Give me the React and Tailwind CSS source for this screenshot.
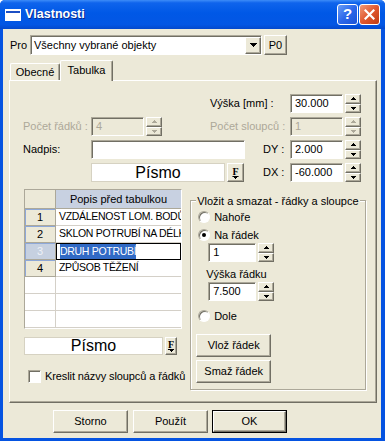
import React from 'react';

const RAISED =
  'bg-[#ece9d8] border border-t-white border-l-white border-r-[#716f64] border-b-[#716f64] shadow-[inset_-1px_-1px_0_#aca899]';
const SUNKEN =
  'border border-t-[#aca899] border-l-[#aca899] border-r-white border-b-white shadow-[inset_1px_1px_0_#716f64]';

function Arrow({ up, color = '#000' }) {
  return (
    <svg width="5" height="3" viewBox="0 0 5 3" shapeRendering="crispEdges">
      <path
        d={up ? 'M2 0h1v1h1v1h1v1H0V2h1V1h1z' : 'M0 0h5v1H4v1H3v1H2V2H1V1H0z'}
        fill={color}
      />
    </svg>
  );
}

function Spin({ disabled }) {
  const c = disabled ? '#aca899' : '#000';
  return (
    <div className="ml-[2px] flex w-4 flex-col self-stretch">
      <div className={`${RAISED} flex flex-1 items-center justify-center`}>
        <Arrow up color={c} />
      </div>
      <div className={`${RAISED} flex flex-1 items-center justify-center`}>
        <Arrow color={c} />
      </div>
    </div>
  );
}

function Field({ value = '', disabled, className = '' }) {
  return (
    <div
      className={`${SUNKEN} ${
        disabled ? 'bg-[#ece9d8] text-[#aca899]' : 'bg-white'
      } flex h-[19px] items-center pl-[4px] whitespace-nowrap ${className}`}
    >
      {value}
    </div>
  );
}

function NumBox({ value, disabled, className = 'w-[53px]' }) {
  return (
    <div className="flex h-[19px] items-center">
      <Field value={value} disabled={disabled} className={className} />
      <Spin disabled={disabled} />
    </div>
  );
}

function FontBtn({ className }) {
  return (
    <div className={`${RAISED} flex flex-col items-center justify-center ${className}`}>
      <span className="font-['Liberation_Serif',serif] text-[10px] font-bold leading-[9px] underline">F</span>
      <Arrow />
    </div>
  );
}

function Radio({ checked }) {
  return (
    <span className="flex h-3 w-3 items-center justify-center rounded-full border border-t-[#aca899] border-l-[#aca899] border-r-white border-b-white bg-white shadow-[inset_1px_1px_0_#716f64]">
      {checked && <span className="h-1 w-1 rounded-full bg-black" />}
    </span>
  );
}

function Button({ children, className = '' }) {
  return (
    <div className={`${RAISED} flex items-center justify-center ${className}`}>{children}</div>
  );
}

const rows = ['VZDÁLENOST LOM. BODŮ', 'SKLON POTRUBÍ NA DÉLKU', 'DRUH POTRUBÍ', 'ZPŮSOB TĚŽENÍ', '', '', ''];

function Grid() {
  return (
    <div className={`${SUNKEN} h-[140px] w-[158px] overflow-hidden bg-white`}>
      <div className="flex h-[19px]">
        <div className="w-[31px] shrink-0 border-r border-b border-[#aca899] bg-[#ece9d8]" />
        <div className="flex flex-1 items-center justify-center whitespace-nowrap border-b border-[#aca899] bg-[#c8d1e1]">
          Popis před tabulkou
        </div>
      </div>
      {rows.map((r, i) => {
        const num = i < 4;
        const sel = i === 2;
        return (
          <div key={i} className="flex h-[17px]">
            <div
              className={`flex w-[31px] shrink-0 items-center justify-center border-r border-b ${
                num
                  ? `border-[#aca899] shadow-[inset_1px_1px_0_#8ea8d8] ${
                      sel ? 'bg-[#c6d0e0] text-[#eef1f7]' : 'bg-[#ece9d8]'
                    }`
                  : 'border-[#d4d0c8] bg-white'
              }`}
            >
              {num ? i + 1 : ''}
            </div>
            <div
              className={`flex flex-1 items-center overflow-hidden whitespace-nowrap pl-[3px] text-[10.5px] tracking-[-0.3px] ${
                sel ? 'border border-black' : 'border-b border-[#d4d0c8]'
              }`}
            >
              {sel ? <span className="bg-[#316ac5] text-white">{r}</span> : r}
            </div>
          </div>
        );
      })}
    </div>
  );
}

export default function App() {
  return (
    <div className="flex h-[441px] w-[385px] flex-col overflow-hidden rounded-t-[5px] bg-[#0553e1] font-['Liberation_Sans',Arial,sans-serif] text-[11px] text-black">
      {/* Title bar */}
      <div className="flex h-[29px] shrink-0 items-center bg-[linear-gradient(180deg,#3d8cf8_0%,#0f64ec_10%,#0058e6_45%,#0356e4_85%,#0448cc_100%)] pl-[5px] pr-[5px]">
        <svg width="16" height="12" viewBox="0 0 16 12" shapeRendering="crispEdges">
          <rect x="0" y="0" width="16" height="12" fill="#fff" />
          <rect x="1" y="2" width="14" height="2" fill="#1c4fc4" />
          <rect x="1" y="5" width="14" height="6" fill="#fff" />
        </svg>
        <span className="ml-[4px] text-[12.5px] font-bold text-white [text-shadow:1px_1px_0_#0b2a8f]">
          Vlastnosti
        </span>
        <div className="ml-auto flex gap-[1px]">
          <div className="flex h-[21px] w-[21px] items-center justify-center rounded-[3px] border border-white bg-[linear-gradient(135deg,#6a9df7_0%,#2c68ea_50%,#1b53d6_100%)] text-[15px] font-bold text-white">
            ?
          </div>
          <div className="flex h-[21px] w-[21px] items-center justify-center rounded-[3px] border border-white bg-[linear-gradient(135deg,#f19a78_0%,#e0582f_50%,#c13b12_100%)]">
            <svg width="11" height="11" viewBox="0 0 11 11">
              <path d="M1.5 1.5l8 8M9.5 1.5l-8 8" stroke="#fff" strokeWidth="2.2" strokeLinecap="square" />
            </svg>
          </div>
        </div>
      </div>

      {/* Body */}
      <div className="mb-[3px] ml-[3px] mr-[4px] flex flex-1 flex-col bg-[#ece9d8]">
        {/* Pro row */}
        <div className="mt-[6px] flex h-[20px] items-center">
          <span className="ml-[7px] w-[20px]">Pro</span>
          <div className={`${SUNKEN} flex h-[20px] w-[232px] items-center bg-white pl-[3px]`}>
            <span className="flex-1">Všechny vybrané objekty</span>
            <div className={`${RAISED} flex h-[17px] w-[16px] items-center justify-center`}>
              <svg width="7" height="4" viewBox="0 0 7 4" shapeRendering="crispEdges">
                <path d="M0 0h7v1H6v1H5v1H4v1H3V3H2V2H1V1H0z" fill="#000" />
              </svg>
            </div>
          </div>
          <Button className="ml-[2px] h-[20px] w-[23px]">P0</Button>
        </div>

        {/* Tabs */}
        <div className="ml-[7px] mt-[4px] flex h-[21px] items-end">
          <div className="flex h-[17px] w-[50px] items-center justify-center rounded-t-[2px] border border-b-0 border-t-white border-l-white border-r-[#716f64] shadow-[inset_-1px_0_0_#aca899]">
            Obecné
          </div>
          <div className="relative z-10 -mb-px flex h-[21px] w-[53px] items-center justify-center rounded-t-[2px] border border-b-0 border-t-white border-l-white border-r-[#716f64] bg-[#ece9d8] pb-[2px] shadow-[inset_-1px_0_0_#aca899]">
            Tabulka
          </div>
        </div>

        {/* Panel */}
        <div className="ml-[6px] flex h-[323px] w-[368px] flex-col border border-t-white border-l-white border-r-[#716f64] border-b-[#716f64] shadow-[inset_-1px_-1px_0_#aca899]">
          <div className="mt-[13px] flex flex-col gap-[4px] pr-[15px]">
            <div className="flex h-[19px] items-center">
              <div className="ml-auto flex items-center">
                <span className="w-[80px]">Výška [mm] :</span>
                <NumBox value="30.000" />
              </div>
            </div>
            <div className="flex h-[19px] items-center">
              <span className="ml-[13px] w-[68px] text-[#aca899]">Počet řádků :</span>
              <NumBox value="4" disabled />
              <div className="ml-auto flex items-center">
                <span className="w-[80px] text-[#aca899]">Počet sloupců :</span>
                <NumBox value="1" disabled />
              </div>
            </div>
            <div className="flex h-[19px] items-center">
              <span className="ml-[13px] w-[68px]">Nadpis:</span>
              <Field className="w-[154px]" />
              <div className="ml-auto flex items-center">
                <span className="w-[27px]">DY :</span>
                <NumBox value="2.000" />
              </div>
            </div>
            <div className="flex h-[19px] items-center">
              <div className="ml-[81px] flex h-[19px] w-[134px] items-center justify-center border border-[#d6d2c2] bg-white text-[16px]">
                Písmo
              </div>
              <FontBtn className="ml-[2px] h-[19px] w-[17px]" />
              <div className="ml-auto flex items-center">
                <span className="w-[27px]">DX :</span>
                <NumBox value="-60.000" />
              </div>
            </div>
          </div>

          {/* Lower section */}
          <div className="mt-[7px] flex">
            <div className="ml-[14px] flex flex-col">
              <Grid />
              <div className="mt-[8px] flex h-[18px]">
                <div className="flex w-[139px] items-center justify-center border border-[#d6d2c2] bg-white text-[16px]">
                  Písmo
                </div>
                <FontBtn className="ml-[2px] w-[12px]" />
              </div>
              <div className="ml-[4px] mt-[13px] flex items-center">
                <span className={`${SUNKEN} h-[13px] w-[13px] bg-white`} />
                <span className="ml-[4px] whitespace-nowrap tracking-[-0.1px]">Kreslit názvy sloupců a řádků</span>
              </div>
            </div>

            <div className="relative ml-[5px] mt-[11px] flex h-[190px] w-[176px] flex-col border border-[#aca899] shadow-[inset_1px_1px_0_#fff,1px_1px_0_#fff]">
              <span className="absolute -top-[8px] left-[5px] bg-[#ece9d8] px-[1px] whitespace-nowrap">
                Vložit a smazat - řádky a sloupce
              </span>
              <div className="ml-[7px] mt-[9px] flex h-[14px] items-center gap-[4px]">
                <Radio />
                <span>Nahoře</span>
              </div>
              <div className="ml-[7px] mt-[4px] flex h-[14px] items-center gap-[4px]">
                <Radio checked />
                <span>Na řádek</span>
              </div>
              <div className="ml-[17px] mt-[1px]">
                <NumBox value="1" className="w-[48px]" />
              </div>
              <span className="ml-[15px] mt-[5px] h-[14px] leading-[14px]">Výška řádku</span>
              <div className="ml-[17px] mt-[1px]">
                <NumBox value="7.500" className="w-[48px]" />
              </div>
              <div className="ml-[7px] mt-[8px] flex h-[14px] items-center gap-[4px]">
                <Radio />
                <span>Dole</span>
              </div>
              <Button className="ml-[5px] mt-[11px] h-[23px] w-[75px]">Vlož řádek</Button>
              <Button className="ml-[5px] mt-[3px] h-[23px] w-[75px]">Smaž řádek</Button>
            </div>
          </div>
        </div>

        {/* Dialog buttons */}
        <div className="ml-[50px] mt-[7px] flex h-[23px]">
          <Button className="w-[75px]">Storno</Button>
          <Button className="ml-[5px] w-[75px]">Použít</Button>
          <div className="ml-[4px] flex w-[75px] border border-black">
            <Button className="flex-1">OK</Button>
          </div>
        </div>
      </div>
    </div>
  );
}
